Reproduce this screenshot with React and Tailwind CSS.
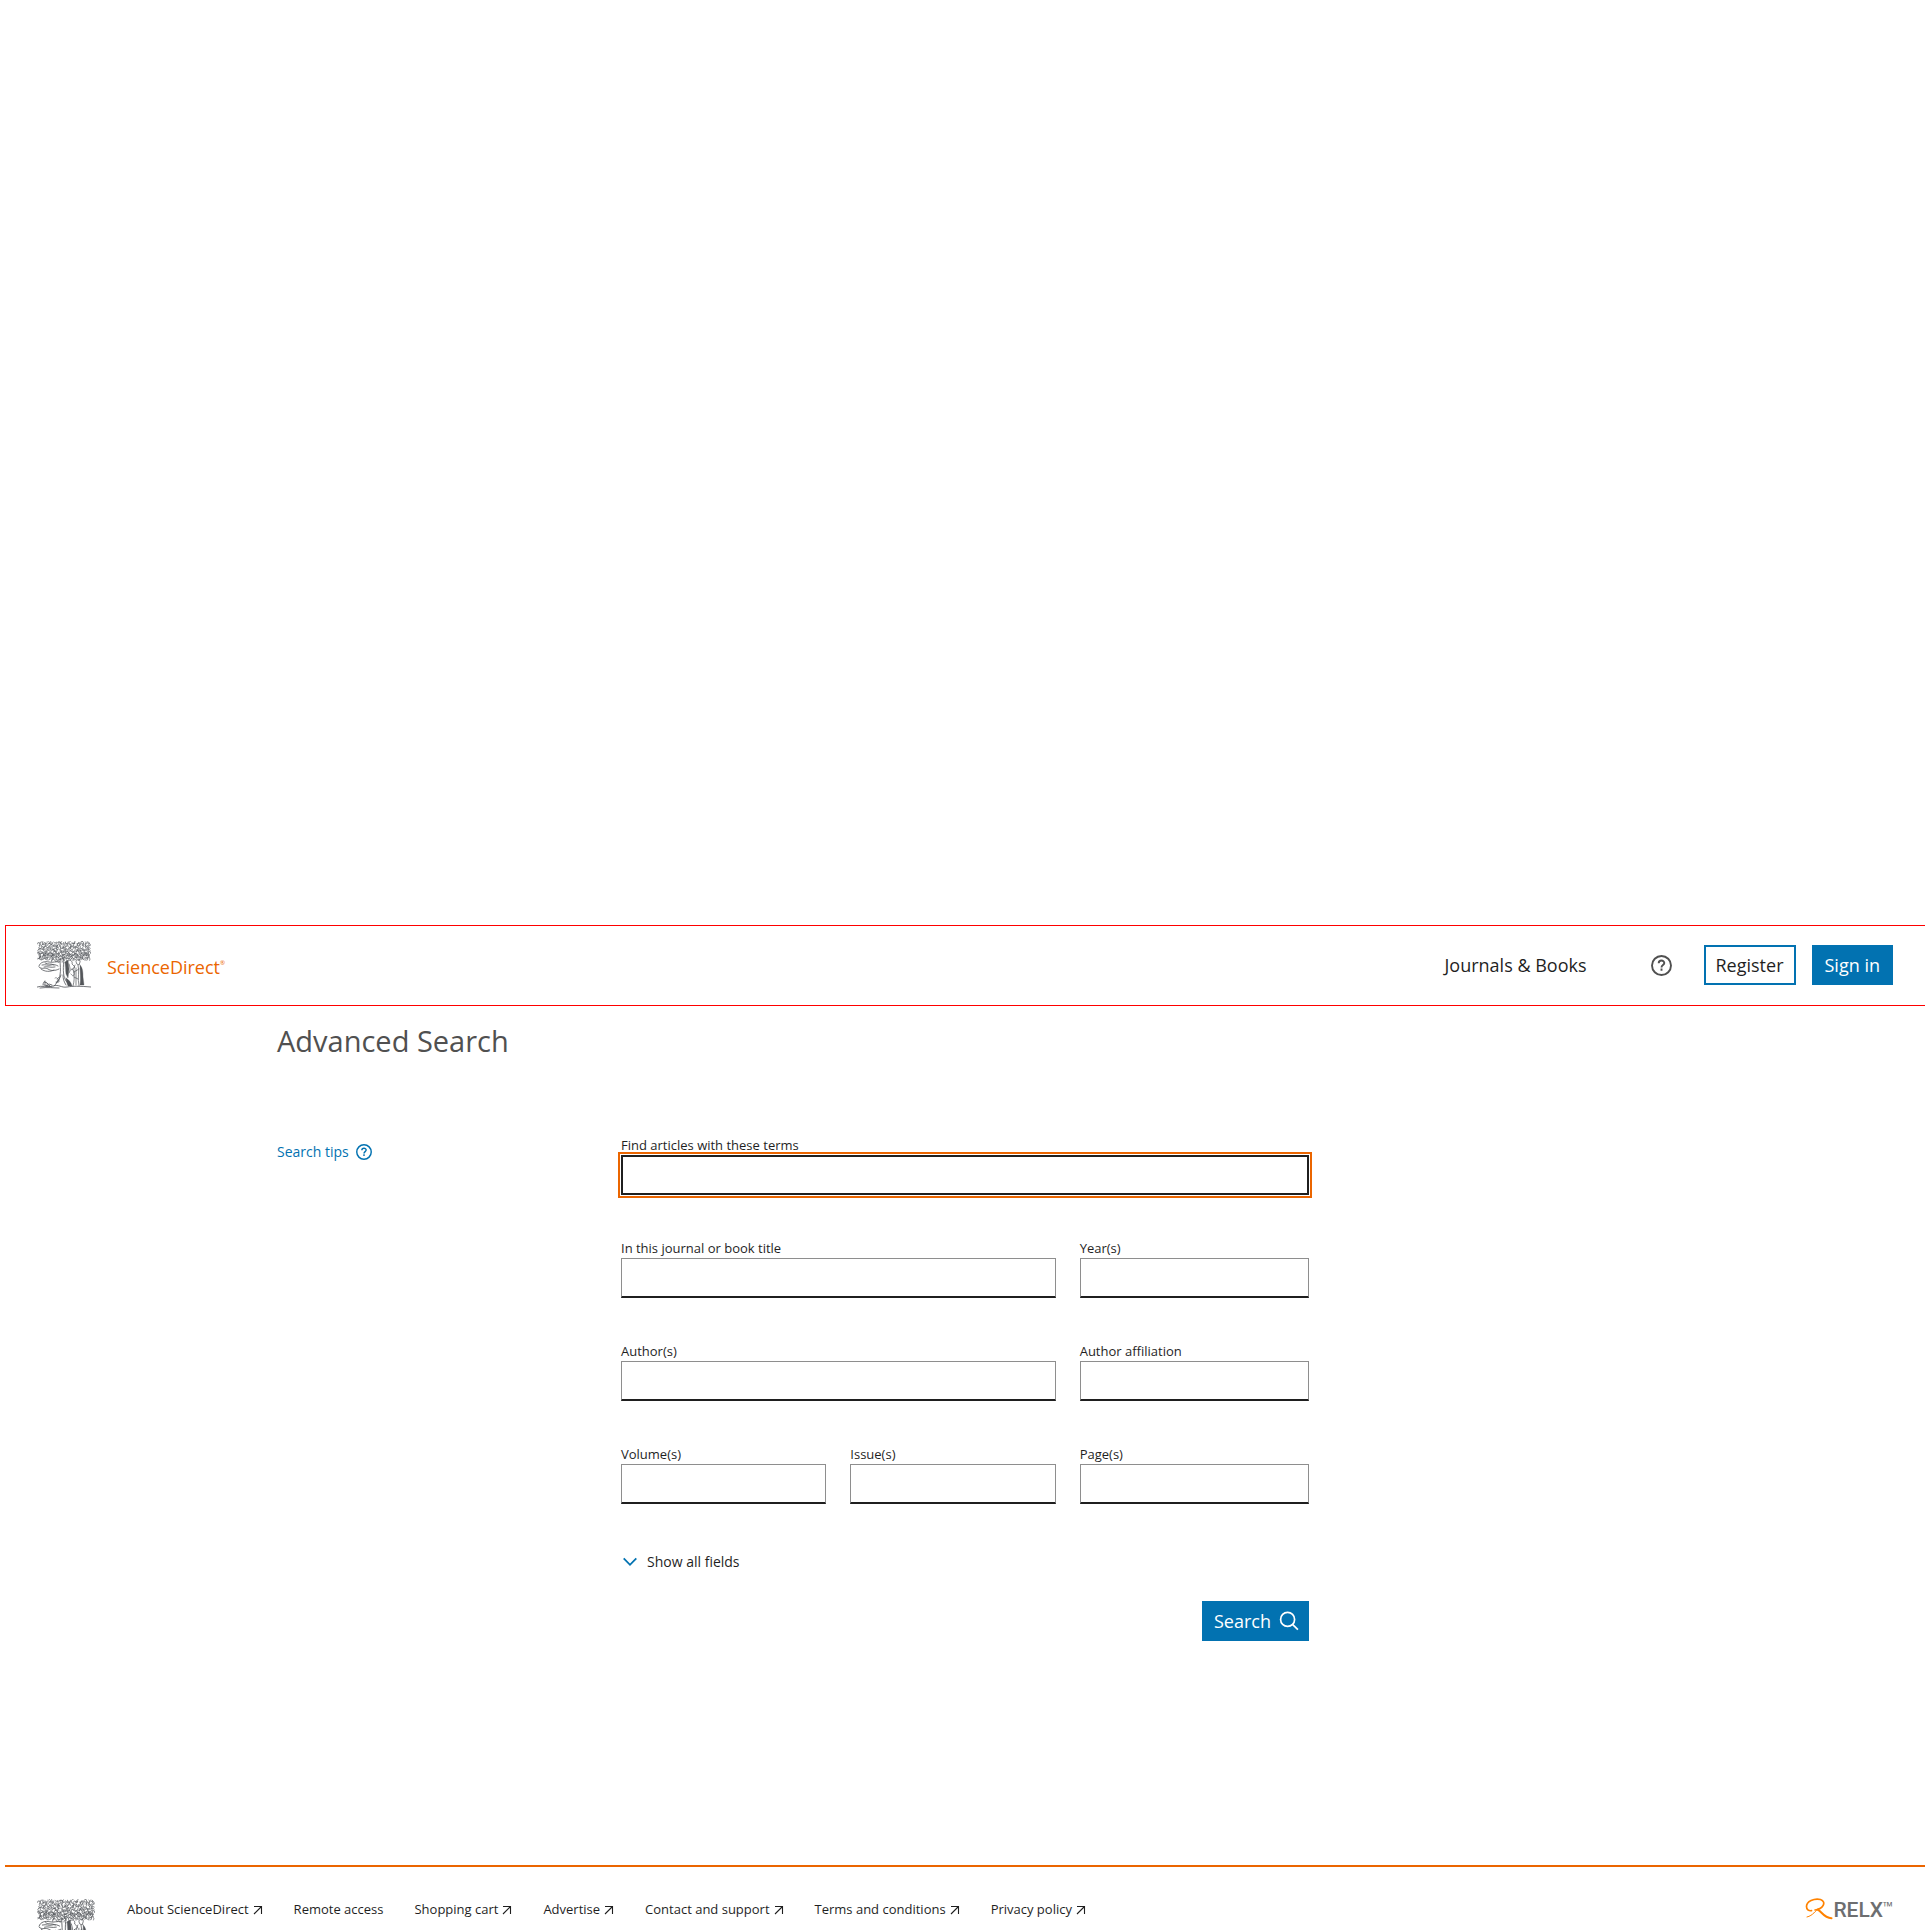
function Squiggles({ x, y, w, h, cols, rows, seed }) {
  let s = seed;
  const rnd = () => {
    s = (s * 16807) % 2147483647;
    return s / 2147483647;
  };
  let d = "";
  for (let r = 0; r < rows; r++) {
    for (let c = 0; c < cols; c++) {
      const px = x + ((c + 0.1 + rnd() * 0.8) * w) / cols;
      const py = y + ((r + 0.1 + rnd() * 0.8) * h) / rows;
      const t = rnd() * Math.PI * 2;
      const n = 1 + rnd() * 0.7;
      const dx = Math.cos(t) * n;
      const dy = Math.sin(t) * n;
      d += `M${(px - dx).toFixed(1)} ${(py - dy).toFixed(1)}q${(dx - dy * 1.4).toFixed(1)} ${(dy + dx * 1.4).toFixed(1)} ${(2 * dx).toFixed(1)} ${(2 * dy).toFixed(1)}`;
    }
  }
  return <path d={d} />;
}

function TreeLogo({ className }) {
  return (
    <svg viewBox="0 0 54 48" className={className} fill="none" stroke="#53565a" strokeWidth="0.6" strokeLinecap="round" aria-hidden="true">
      <Squiggles x={1} y={1} w={52} h={13} cols={27} rows={7} seed={4217} />
      <Squiggles x={1} y={13} w={52} h={6} cols={26} rows={4} seed={91133} />
      <Squiggles x={15} y={18} w={15} h={3} cols={6} rows={1} seed={7781} />
      <path d="M2 25c1-4 6-5 10-4s7-1 10 0M2 26c3 3 6 0 9 2s7 2 11 0M5 24c4-1 6 1 9 0s5 0 7 1M4 28c4 3 9 3 13 1M8 22c3 2 6 0 9 2M7 26c3-1 7 1 11 0" strokeWidth="0.8" />
      <path d="M23 18c0 6 1 11 0 16-1 5-2 7-6 11M27 18c-1 8-1 16 1 20 1 3 4 5 6 7M24 34c-1 4-3 6-5 8M26 34c0 4 1 7 3 10" strokeWidth="0.8" />
      <path d="M28 21l3-2 1 9-1 9-2-4z" fill="#53565a" strokeWidth="0.3" />
      <path d="M43 24c3 3 3 8 3 12l1 8h-4c1-5 0-14 0-20z" fill="#53565a" strokeWidth="0.3" />
      <path d="M29 37c3 2 5 4 6 8h-4c-1-3-2-5-2-8z" fill="#53565a" strokeWidth="0.3" />
      <path d="M31 20c2-2 5 0 4 3l3 3-4 3M32 23c1 4 2 6 0 9M35 28c2 2 3 4 2 6s-2 0-3-1M39 20c0-2 5-2 4 1l-1 3-2-1zM38 24c-3 5 1 11-2 21M41 24c2 6-1 13 1 21M39 27v17M37 31l5-3M37 36l4 2" strokeWidth="0.7" />
      <path d="M18 37c1-1 3 0 3 2l-1 2M20 38l2-2M19 41h3v-2" strokeWidth="0.6" />
      <path d="M6 44c0-3 2-5 2-2 1-2 3 0 2 3M8 40v4M10 42l3 3M12 43l3 1M7 44l5 1M0 46c5-2 10 1 16-1s8 2 14 1 12-1 24 0M3 47c7-1 14 0 19 0M9 45l6 1" strokeWidth="0.8" />
    </svg>
  );
}

function HelpIcon({ className }) {
  return (
    <svg viewBox="0 0 21 21" className={className} fill="none" stroke="currentColor" strokeWidth="1.9" aria-hidden="true">
      <circle cx="10.5" cy="10.5" r="9.5" />
      <path d="M7.7 8.2c0-3.6 5.6-3.4 5.6-.2 0 2.1-2.8 2-2.8 4.4M10.5 13.6v2.1" />
    </svg>
  );
}

function ArrowIcon() {
  return (
    <svg viewBox="0 0 10 10" className="mt-0.5 size-2.5 shrink-0" fill="none" stroke="#1f1f1f" strokeWidth="1.1" aria-hidden="true">
      <path d="M1 1.5h7.5v7.5M8.5 1.5L1 9" />
    </svg>
  );
}

const fields = [
  { id: "qs", label: "Find articles with these terms", cell: "col-span-3", focused: true },
  { id: "pub", label: "In this journal or book title", cell: "col-span-2 pr-6" },
  { id: "date", label: "Year(s)", cell: "" },
  { id: "authors", label: "Author(s)", cell: "col-span-2 pr-6" },
  { id: "affiliations", label: "Author affiliation", cell: "" },
  { id: "volume", label: "Volume(s)", cell: "pr-6" },
  { id: "issue", label: "Issue(s)", cell: "pr-6" },
  { id: "page", label: "Page(s)", cell: "" },
];

const footerLinks = [
  ["About ScienceDirect", true],
  ["Remote access", false],
  ["Shopping cart", true],
  ["Advertise", true],
  ["Contact and support", true],
  ["Terms and conditions", true],
  ["Privacy policy", true],
];

export default function App() {
  return (
    <div className="flex h-screen flex-col overflow-hidden bg-white px-[5px] font-['Open_Sans',sans-serif] text-[#1f1f1f]">
      <div className="min-h-0 grow" />

      <header className="flex shrink-0 items-center border-y border-l border-[#ff0000] pt-[19px] pr-8 pb-5 pl-[31px]">
        <a href="#home" className="flex items-center" aria-label="ScienceDirect home">
          <TreeLogo className="-my-1 h-12 w-[54px]" />
          <span className="mt-1 ml-4 flex text-[18px] leading-6 text-[#eb6500]">
            ScienceDirect<span className="text-[6px] leading-4">®</span>
          </span>
        </a>
        <nav className="ml-auto flex items-center">
          <a href="#journals" className="text-[18px] leading-6">Journals &amp; Books</a>
          <button type="button" aria-label="Help" className="ml-16 text-[#505050]">
            <HelpIcon className="size-[21px]" />
          </button>
          <a href="#register" className="ml-8 flex h-10 items-center border-2 border-[#0272b1] px-[10px] text-[18px]">Register</a>
          <a href="#signin" className="ml-4 flex h-10 items-center bg-[#0272b1] px-[13px] text-[18px] font-medium text-white">Sign in</a>
        </nav>
      </header>

      <main className="mx-auto w-full max-w-[1376px] shrink-0 pt-[17px]">
        <h1 className="text-[29px] leading-9 text-[#505050]">Advanced Search</h1>
        <div className="mt-19 grid grid-cols-4">
          <div className="pt-[7px]">
            <a href="#tips" className="flex items-center gap-[7px] text-[14px] leading-5 text-[#0272b1]">
              Search tips
              <HelpIcon className="size-4" />
            </a>
          </div>
          <form className="col-span-2" onSubmit={(e) => e.preventDefault()}>
            <div className="grid grid-cols-3 gap-y-[43px]">
              {fields.map((f) => (
                <div key={f.id} className={f.cell}>
                  <label htmlFor={f.id} className="block text-[13px] leading-5">{f.label}</label>
                  <input
                    id={f.id}
                    name={f.id}
                    type="text"
                    className={
                      f.focused
                        ? "block h-10 w-full border-2 border-[#1f1f1f] bg-white px-2 outline-2 outline-offset-1 outline-[#eb6500]"
                        : "block h-10 w-full border border-b-2 border-[#8e8e8e] border-b-[#1f1f1f] bg-white px-2 outline-none"
                    }
                  />
                </div>
              ))}
            </div>
            <button type="button" className="mt-12 flex items-center gap-[10px] pl-0.5 text-[14px] leading-5">
              <svg viewBox="0 0 14 10" className="h-2.5 w-3.5" fill="none" stroke="#0272b1" strokeWidth="1.8" aria-hidden="true">
                <path d="M.7 1.3L7 7.8l6.3-6.5" />
              </svg>
              Show all fields
            </button>
            <div className="mt-[29px] flex justify-end">
              <button type="submit" className="flex h-10 items-center gap-2 bg-[#0272b1] pr-[10px] pl-3 text-[18px] font-medium text-white">
                Search
                <svg viewBox="0 0 20 20" className="size-5" fill="none" stroke="currentColor" strokeWidth="1.7" aria-hidden="true">
                  <circle cx="8.6" cy="8.4" r="7" />
                  <path d="M13.5 13.3l5.4 5.4" />
                </svg>
              </button>
            </div>
          </form>
        </div>
      </main>

      <footer className="mt-56 flex h-[65px] shrink-0 items-start overflow-hidden border-t-2 border-[#eb6500] pr-8 pl-8">
        <a href="#elsevier" aria-label="Elsevier" className="mt-8 shrink-0">
          <TreeLogo className="h-[52px] w-[58px]" />
        </a>
        <ul className="mt-8 ml-8 flex gap-[31px] text-[13px] leading-5">
          {footerLinks.map(([label, external]) => (
            <li key={label}>
              <a href="#footer" className="flex items-center gap-1 whitespace-nowrap">
                {label}
                {external && <ArrowIcon />}
              </a>
            </li>
          ))}
        </ul>
        <a href="#relx" aria-label="RELX" className="mt-[31px] ml-auto flex text-[#6d6e70]">
          <svg viewBox="0 0 28 22" className="h-[22px] w-7" fill="none" stroke="#ff8200" strokeLinecap="round" aria-hidden="true">
            <path d="M10 12C18 11 22 4 15.5 1.5 9 0 1.500 3.500 1.500 8.500c0 3 2 4.500 5 4.200" strokeWidth="1.7" />
            <path d="M14 10.500C10 12.500 8.500 17.500 2 19" strokeWidth="1" />
            <path d="M12.500 11.500c4 1.500 6 8.300 14 8.800" strokeWidth="2" />
          </svg>
          <span className="font-[Roboto,sans-serif] text-[21px] leading-6 font-medium">RELX</span>
          <span className="text-[13px] leading-4">™</span>
        </a>
      </footer>
    </div>
  );
}
